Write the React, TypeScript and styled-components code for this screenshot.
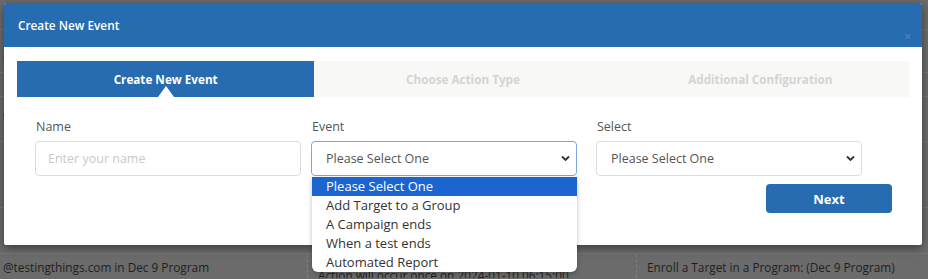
import styled, { createGlobalStyle } from "styled-components";

const Global = createGlobalStyle`
  html, body {
    margin: 0;
    padding: 0;
    background: #6b6b6b;
    font-family: "Open Sans", "Liberation Sans", sans-serif;
    font-size: 13px;
  }
  #root {
    position: relative;
    width: 928px;
    height: 279px;
    overflow: hidden;
  }
`;

// dimmed page behind the modal
const Page = styled.div`
  width: 928px;
  height: 279px;
  background: #6b6b6b;
  color: #1f1f1f;
`;

const Row = styled.div<{ $h: number; $line?: boolean }>`
  box-sizing: border-box;
  display: grid;
  grid-template-columns: 307px 329px 1fr;
  height: ${(p) => p.$h}px;
  border-bottom: 1px solid ${(p) => (p.$line === false ? "transparent" : "#777")};
`;

const Cell = styled.div<{ $pt?: number; $pl?: number }>`
  padding: ${(p) => p.$pt ?? 8}px 10px 0 ${(p) => p.$pl ?? 10}px;
  border-left: 1px dashed #7f7f7f;
  white-space: nowrap;
  overflow: hidden;
  line-height: 18px;
  font-size: 11.8px;
  &:first-child {
    border-left: none;
  }
`;

const Overlay = styled.div`
  position: absolute;
  left: 4px;
  top: 3px;
  width: 918px;
  height: 242px;
  background: #fff;
  box-shadow: 0 3px 10px rgba(0, 0, 0, 0.45);
  border-radius: 2px;
`;

const Header = styled.div`
  position: relative;
  height: 44px;
  background: #276bb0;
  color: #fff;
  font-weight: 600;
  font-size: 11.8px;
  display: flex;
  align-items: center;
  padding-left: 14px;
  border-radius: 2px 2px 0 0;
`;

const Close = styled.span`
  position: absolute;
  right: 11px;
  top: 27px;
  color: #5b8cc2;
  font-size: 12px;
  font-weight: 400;
  line-height: 14px;
`;

const Body = styled.div`
  padding: 14px 13px 0;
`;

const Stepper = styled.div`
  display: grid;
  grid-template-columns: repeat(3, 1fr);
  height: 36px;
  background: #f8f8f7;
`;

const Step = styled.div<{ $active?: boolean }>`
  position: relative;
  display: flex;
  align-items: center;
  justify-content: center;
  font-weight: 700;
  font-size: 11.7px;
  color: ${(p) => (p.$active ? "#fff" : "#d4d4d4")};
  background: ${(p) => (p.$active ? "#276bb0" : "transparent")};
  ${(p) =>
    p.$active &&
    `
    &::after {
      content: "";
      position: absolute;
      bottom: 0;
      left: 50%;
      margin-left: -8px;
      border-left: 8.5px solid transparent;
      border-right: 8.5px solid transparent;
      border-bottom: 11px solid #fff;
    }
  `}
`;

const Form = styled.div`
  display: flex;
  padding: 21px 0 0 18px;
`;

const Field = styled.div<{ $ml?: number }>`
  position: relative;
  display: flex;
  flex-direction: column;
  width: 266px;
  margin-left: ${(p) => p.$ml ?? 0}px;
`;

const Label = styled.label`
  color: #555;
  font-size: 12.5px;
  line-height: 18px;
  padding-left: 1px;
  margin-bottom: 5px;
`;

const Input = styled.input`
  box-sizing: border-box;
  height: 35px;
  width: 100%;
  border: 1px solid #ddd;
  border-radius: 4px;
  padding: 0 12px;
  font-family: inherit;
  font-size: 12.5px;
  outline: none;
  &::placeholder {
    color: #c9c9c9;
  }
`;

const SelectBox = styled.div<{ $focus?: boolean }>`
  box-sizing: border-box;
  height: 35px;
  display: flex;
  align-items: center;
  justify-content: space-between;
  border: 1px solid ${(p) => (p.$focus ? "#7aa8dc" : "#ddd")};
  border-radius: 4px;
  padding: 0 6px 0 14px;
  color: #555;
  font-size: 12.5px;
`;

const Menu = styled.ul`
  position: absolute;
  left: 1px;
  top: 59px;
  width: 265px;
  margin: 0;
  padding: 0;
  list-style: none;
  background: #fff;
  border-radius: 0 0 6px 6px;
  box-shadow: 0 2px 5px rgba(0, 0, 0, 0.25);
  overflow: hidden;
  z-index: 2;
`;

const Option = styled.li<{ $selected?: boolean }>`
  height: 19px;
  line-height: 19px;
  padding-left: 14px;
  font-size: 13px;
  color: ${(p) => (p.$selected ? "#fff" : "#333")};
  background: ${(p) => (p.$selected ? "#1b65d1" : "transparent")};
`;

const Actions = styled.div`
  display: flex;
  justify-content: flex-end;
  padding: 8px 17px 0 0;
`;

const NextButton = styled.button`
  width: 126px;
  height: 29px;
  border: none;
  border-radius: 4px;
  background: #276bb0;
  color: #fff;
  font-family: inherit;
  font-weight: 700;
  font-size: 13px;
`;

function Chevron() {
  return (
    <svg width="9" height="7" viewBox="0 0 9 7">
      <path d="M1 1.5 L4.5 5 L8 1.5" fill="none" stroke="#333" strokeWidth="1.9" />
    </svg>
  );
}

const options = [
  "Please Select One",
  "Add Target to a Group",
  "A Campaign ends",
  "When a test ends",
  "Automated Report",
];

export default function App() {
  return (
    <>
      <Global />
      <Page>
        <Row $h={30} />
        <Row $h={43}>
          <Cell $pt={19} $pl={3}>t</Cell>
          <Cell />
          <Cell />
        </Row>
        <Row $h={24} />
        <Row $h={45}>
          <Cell $pt={10} $pl={3}>w</Cell>
          <Cell />
          <Cell />
        </Row>
        <Row $h={66} />
        <Row $h={46} />
        <Row $h={25} $line={false}>
          <Cell $pt={4} $pl={3}>@testingthings.com in Dec 9 Program</Cell>
          <Cell $pt={12}>Action will occur once on 2024-01-10 06:15:00</Cell>
          <Cell $pt={4}>Enroll a Target in a Program: (Dec 9 Program)</Cell>
        </Row>
      </Page>
      <Overlay>
        <Header>
          Create New Event
          <Close>×</Close>
        </Header>
        <Body>
          <Stepper>
            <Step $active>Create New Event</Step>
            <Step>Choose Action Type</Step>
            <Step>Additional Configuration</Step>
          </Stepper>
          <Form>
            <Field>
              <Label>Name</Label>
              <Input placeholder="Enter your name" />
            </Field>
            <Field $ml={10}>
              <Label>Event</Label>
              <SelectBox $focus>
                Please Select One
                <Chevron />
              </SelectBox>
              <Menu>
                {options.map((o, i) => (
                  <Option key={o} $selected={i === 0}>
                    {o}
                  </Option>
                ))}
              </Menu>
            </Field>
            <Field $ml={19}>
              <Label>Select</Label>
              <SelectBox>
                Please Select One
                <Chevron />
              </SelectBox>
            </Field>
          </Form>
          <Actions>
            <NextButton>Next</NextButton>
          </Actions>
        </Body>
      </Overlay>
    </>
  );
}
